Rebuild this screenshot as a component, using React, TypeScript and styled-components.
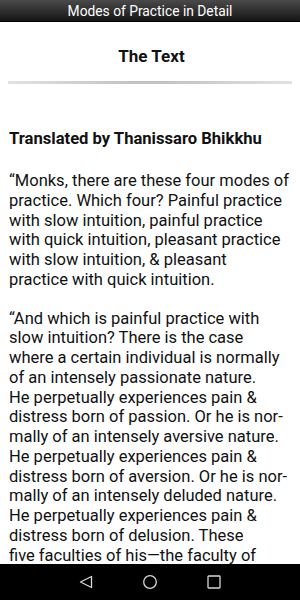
import React from "react";
import styled, { createGlobalStyle } from "styled-components";

const Global = createGlobalStyle`
  html, body { margin: 0; padding: 0; background: #fff; }
  body { font-family: Roboto, "Noto Sans", sans-serif; overflow: hidden; }
`;

const Screen = styled.div`
  width: 300px;
  height: 600px;
  display: flex;
  flex-direction: column;
  background: #fff;
  overflow: hidden;
`;

const TitleBar = styled.div`
  height: 21px;
  flex: none;
  background: linear-gradient(#4a4a4a, #151515);
  color: #fff;
  font-size: 13.8px;
  display: flex;
  align-items: center;
  justify-content: center;
  border-bottom: 1px solid #000;
`;

const Content = styled.div`
  flex: 1;
  overflow: hidden;
  padding: 0 6px 0 9px;
  color: #111;
`;

const Heading = styled.h1`
  margin: 24px 0 0;
  font-size: 17px;
  font-weight: 700;
  text-align: center;
  line-height: 20px;
`;

const Divider = styled.div`
  margin: 15px 2px 0 -1px;
  height: 3px;
  background: linear-gradient(90deg, #e2e2e2, #c2c2c2 45%, #c2c2c2 55%, #e2e2e2);
`;

const Byline = styled.p`
  margin: 45px 0 0;
  padding-bottom: 3px;
  font-size: 16.6px;
  font-weight: 700;
  line-height: 20px;
`;

const Para = styled.p`
  margin: 19px 0 0;
  font-size: 16.5px;
  line-height: 19.75px;
  white-space: nowrap;
`;

const NavBar = styled.div`
  height: 36px;
  flex: none;
  background: #000;
  display: flex;
  align-items: center;
  justify-content: center;
  gap: 48px;
`;

const NavIcon = styled.svg`
  width: 16px;
  height: 16px;
`;

const lines1 = [
  "“Monks, there are these four modes of",
  "practice. Which four? Painful practice",
  "with slow intuition, painful practice",
  "with quick intuition, pleasant practice",
  "with slow intuition, & pleasant",
  "practice with quick intuition.",
];

const lines2 = [
  "“And which is painful practice with",
  "slow intuition? There is the case",
  "where a certain individual is normally",
  "of an intensely passionate nature.",
  "He perpetually experiences pain &",
  "distress born of passion. Or he is nor-",
  "mally of an intensely aversive nature.",
  "He perpetually experiences pain &",
  "distress born of aversion. Or he is nor-",
  "mally of an intensely deluded nature.",
  "He perpetually experiences pain &",
  "distress born of delusion. These",
  "five faculties of his—the faculty of",
];

const Lines: React.FC<{ lines: string[] }> = ({ lines }) => (
  <>
    {lines.map((l, i) => (
      <React.Fragment key={i}>
        {l}
        {i < lines.length - 1 && <br />}
      </React.Fragment>
    ))}
  </>
);

export default function App() {
  return (
    <>
      <Global />
      <Screen>
        <TitleBar>Modes of Practice in Detail</TitleBar>
        <Content>
          <Heading>The Text</Heading>
          <Divider />
          <Byline>Translated by Thanissaro Bhikkhu</Byline>
          <Para>
            <Lines lines={lines1} />
          </Para>
          <Para>
            <Lines lines={lines2} />
          </Para>
        </Content>
        <NavBar>
          <NavIcon viewBox="0 0 16 16">
            <path d="M13.5 2.5 L2.5 8 L13.5 13.5 Z" fill="none" stroke="#d8d8d8" strokeWidth="1.3" strokeLinejoin="round" />
          </NavIcon>
          <NavIcon viewBox="0 0 16 16">
            <circle cx="8" cy="8" r="6.3" fill="none" stroke="#d8d8d8" strokeWidth="1.3" />
          </NavIcon>
          <NavIcon viewBox="0 0 16 16">
            <rect x="2" y="2" width="12" height="12" rx="0.8" fill="none" stroke="#d8d8d8" strokeWidth="1.3" />
          </NavIcon>
        </NavBar>
      </Screen>
    </>
  );
}
